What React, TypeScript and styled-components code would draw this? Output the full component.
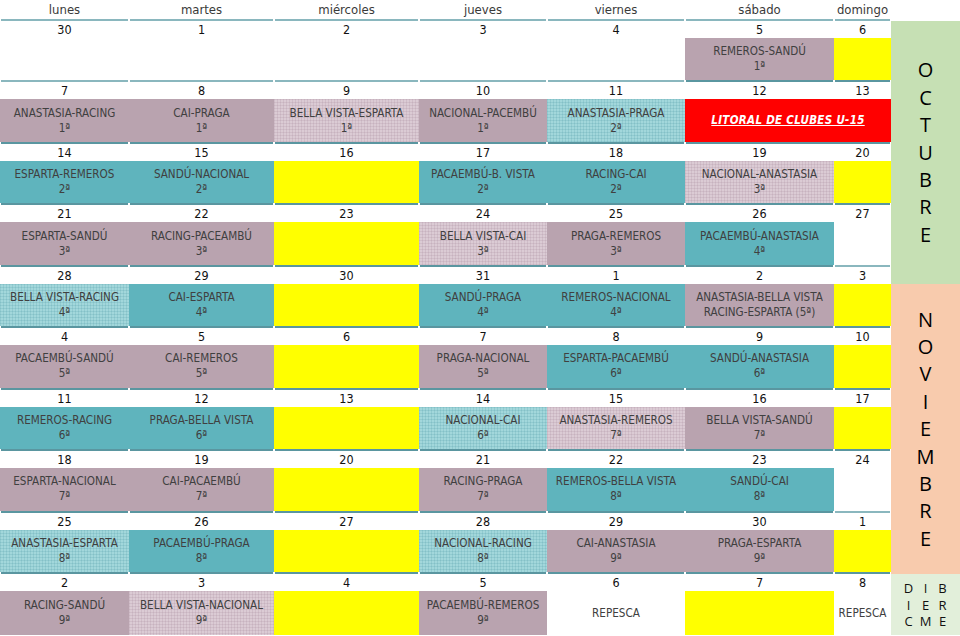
import React, {FC} from "react";
import styled, {createGlobalStyle, css} from "styled-components";

type Kind = "none" | "mauve" | "mauveLight" | "teal" | "tealLight" | "yellow" | "red" | "plain";

interface Day {
    d: string,
    kind: Kind,
    lines?: string[],
    span?: number,
}

const GlobalStyle = createGlobalStyle`
  html, body {
    margin: 0;
    padding: 0;
    background: #ffffff;
  }
  body {
    font-family: "DejaVu Sans Condensed", "DejaVu Sans", sans-serif;
    font-stretch: condensed;
  }
`

const fills: Record<Kind, ReturnType<typeof css>> = {
    none: css`background: #ffffff;`,
    plain: css`background: #ffffff;`,
    mauve: css`background: #b9a3af;`,
    mauveLight: css`
      background-color: #dbcbd4;
      background-image: linear-gradient(rgba(150, 120, 140, 0.16) 1px, transparent 1px),
      linear-gradient(90deg, rgba(150, 120, 140, 0.16) 1px, transparent 1px);
      background-size: 3px 3px;
    `,
    teal: css`background: #5fb4bd;`,
    tealLight: css`
      background-color: #a2d7db;
      background-image: linear-gradient(rgba(60, 140, 150, 0.16) 1px, transparent 1px),
      linear-gradient(90deg, rgba(60, 140, 150, 0.16) 1px, transparent 1px);
      background-size: 3px 3px;
    `,
    yellow: css`background: #ffff00;`,
    red: css`background: #ff0000;`,
}

const Calendar = styled.div`
  display: grid;
  grid-template-columns: 129px 145px 145px 128px 138px 149px 57px 69px;
  grid-template-rows: 21px repeat(10, 17px 44.44px);
  width: 960px;
  height: 636px;
  overflow: hidden;
`

const HeadCell = styled.div`
  display: flex;
  flex-direction: column;
`

const HeadText = styled.div`
  flex: 1;
  text-align: center;
  font-size: 13px;
  line-height: 19px;
  color: #3a3a3a;
`

const Rule = styled.div<{ $dark?: boolean }>`
  height: 2px;
  margin: 0 1px;
  background: ${p => p.$dark ? "#5a96a0" : "#8ab7be"};
`

const DateCell = styled.div`
  text-align: center;
  font-size: 12.5px;
  line-height: 17px;
  color: #111111;
`

const EventCell = styled.div<{ $span: number }>`
  display: flex;
  flex-direction: column;
  grid-column: span ${p => p.$span};
`

const Fill = styled.div<{ $kind: Kind }>`
  flex: 1;
  display: flex;
  flex-direction: column;
  align-items: center;
  justify-content: center;
  font-size: 11.6px;
  line-height: 15px;
  color: #404040;
  text-align: center;
  white-space: nowrap;
  ${p => fills[p.$kind]}
`

const RedTitle = styled.span`
  color: #ffffff;
  font-weight: bold;
  font-style: italic;
  text-decoration: underline;
  font-size: 11.5px;
  letter-spacing: 0.3px;
`

const Month = styled.div<{ $bg: string, $rows: string }>`
  grid-column: 8;
  grid-row: ${p => p.$rows};
  background: ${p => p.$bg};
  display: flex;
  flex-direction: column;
  align-items: center;
  justify-content: center;
  font-family: "Open Sans", "Lato", sans-serif;
  font-stretch: normal;
  font-size: 20px;
  line-height: 27.4px;
  color: #000000;
`

const SmallMonth = styled.div`
  display: grid;
  grid-template-columns: repeat(3, 17px);
  grid-auto-rows: 16.5px;
  justify-items: center;
  align-items: center;
  font-family: "Open Sans", "Lato", sans-serif;
  font-size: 13px;
  line-height: 16px;
  color: #111111;
`

const dayNames = ["lunes", "martes", "miércoles", "jueves", "viernes", "sábado", "domingo"];

const m = (a: string, b: string): Day => ({d: a, kind: "mauve", lines: b.split("|")});
const ml = (a: string, b: string): Day => ({d: a, kind: "mauveLight", lines: b.split("|")});
const t = (a: string, b: string): Day => ({d: a, kind: "teal", lines: b.split("|")});
const tl = (a: string, b: string): Day => ({d: a, kind: "tealLight", lines: b.split("|")});
const y = (a: string): Day => ({d: a, kind: "yellow"});
const e = (a: string): Day => ({d: a, kind: "none"});

const weeks: Day[][] = [
    [e("30"), e("1"), e("2"), e("3"), e("4"), m("5", "REMEROS-SANDÚ|1ª"), y("6")],
    [m("7", "ANASTASIA-RACING|1ª"), m("8", "CAI-PRAGA|1ª"), ml("9", "BELLA VISTA-ESPARTA|1ª"),
        m("10", "NACIONAL-PACEMBÚ|1ª"), tl("11", "ANASTASIA-PRAGA|2ª"),
        {d: "12", kind: "red", span: 2}, {d: "13", kind: "red", span: 0}],
    [t("14", "ESPARTA-REMEROS|2ª"), t("15", "SANDÚ-NACIONAL|2ª"), y("16"), t("17", "PACAEMBÚ-B. VISTA|2ª"),
        t("18", "RACING-CAI|2ª"), ml("19", "NACIONAL-ANASTASIA|3ª"), y("20")],
    [m("21", "ESPARTA-SANDÚ|3ª"), m("22", "RACING-PACEAMBÚ|3ª"), y("23"), ml("24", "BELLA VISTA-CAI|3ª"),
        m("25", "PRAGA-REMEROS|3ª"), t("26", "PACAEMBÚ-ANASTASIA|4ª"), e("27")],
    [tl("28", "BELLA VISTA-RACING|4ª"), t("29", "CAI-ESPARTA|4ª"), y("30"), t("31", "SANDÚ-PRAGA|4ª"),
        t("1", "REMEROS-NACIONAL|4ª"), m("2", "ANASTASIA-BELLA VISTA|RACING-ESPARTA (5ª)"), y("3")],
    [m("4", "PACAEMBÚ-SANDÚ|5ª"), m("5", "CAI-REMEROS|5ª"), y("6"), m("7", "PRAGA-NACIONAL|5ª"),
        t("8", "ESPARTA-PACAEMBÚ|6ª"), t("9", "SANDÚ-ANASTASIA|6ª"), y("10")],
    [t("11", "REMEROS-RACING|6ª"), t("12", "PRAGA-BELLA VISTA|6ª"), y("13"), tl("14", "NACIONAL-CAI|6ª"),
        ml("15", "ANASTASIA-REMEROS|7ª"), m("16", "BELLA VISTA-SANDÚ|7ª"), y("17")],
    [m("18", "ESPARTA-NACIONAL|7ª"), m("19", "CAI-PACAEMBÚ|7ª"), y("20"), m("21", "RACING-PRAGA|7ª"),
        t("22", "REMEROS-BELLA VISTA|8ª"), t("23", "SANDÚ-CAI|8ª"), e("24")],
    [tl("25", "ANASTASIA-ESPARTA|8ª"), t("26", "PACAEMBÚ-PRAGA|8ª"), y("27"), tl("28", "NACIONAL-RACING|8ª"),
        m("29", "CAI-ANASTASIA|9ª"), m("30", "PRAGA-ESPARTA|9ª"), y("1")],
    [m("2", "RACING-SANDÚ|9ª"), ml("3", "BELLA VISTA-NACIONAL|9ª"), y("4"), m("5", "PACAEMBÚ-REMEROS|9ª"),
        {d: "6", kind: "plain", lines: ["REPESCA"]}, y("7"), {d: "8", kind: "plain", lines: ["REPESCA"]}],
];

const isDark = (k: Kind) => k !== "none" && k !== "plain";

const App: FC = () => {
    return (
        <>
            <GlobalStyle/>
            <Calendar>
                <Month $bg="#c6e0b4" $rows="2 / 11">
                    {"OCTUBRE".split("").map((c, i) => <span key={i}>{c}</span>)}
                </Month>
                <Month $bg="#f8cbad" $rows="11 / 20">
                    {"NOVIEMBRE".split("").map((c, i) => <span key={i}>{c}</span>)}
                </Month>
                <Month $bg="#e2efda" $rows="20 / 22">
                    <SmallMonth>
                        {"DIBIERCME".split("").map((c, i) => <span key={i}>{c}</span>)}
                    </SmallMonth>
                </Month>

                {dayNames.map(name => (
                    <HeadCell key={name}>
                        <HeadText>{name}</HeadText>
                        <Rule/>
                    </HeadCell>
                ))}
                <div/>

                {weeks.map((week, w) => (
                    <React.Fragment key={w}>
                        {week.map((day, i) => <DateCell key={"d" + i}>{day.d}</DateCell>)}
                        {week.filter(day => day.span !== 0).map((day, i) => (
                            <EventCell key={"e" + i} $span={day.span || 1}>
                                <Fill $kind={day.kind}>
                                    {day.kind === "red"
                                        ? <RedTitle>LITORAL DE CLUBES U-15</RedTitle>
                                        : day.lines?.map((l, j) => <span key={j}>{l}</span>)}
                                </Fill>
                                {w < weeks.length - 1 && <Rule $dark={isDark(day.kind)}/>}
                            </EventCell>
                        ))}
                    </React.Fragment>
                ))}
            </Calendar>
        </>
    )
}

export default App
